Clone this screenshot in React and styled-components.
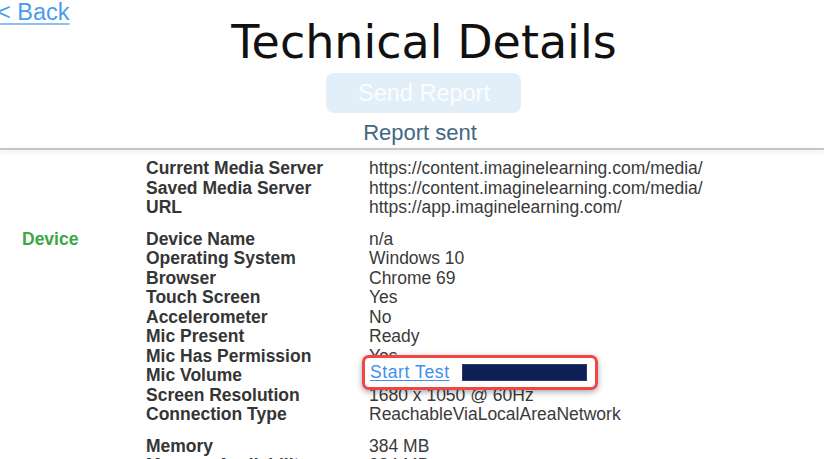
import React from "react";
import styled, { createGlobalStyle } from "styled-components";

const Global = createGlobalStyle`
  html, body { margin: 0; padding: 0; background: #ffffff; }
  body { width: 824px; height: 459px; overflow: hidden; font-family: "Liberation Sans", Arial, sans-serif; }
`;

const Page = styled.div`
  width: 824px;
  height: 459px;
  overflow: hidden;
  background: #fff;
`;

const Top = styled.header`
  display: grid;
  grid-template-columns: 1fr auto 1fr;
  padding-left: 24px;
`;

const BackLink = styled.a`
  grid-column: 1;
  grid-row: 1;
  justify-self: start;
  align-self: start;
  margin-left: -27px;
  margin-top: 1px;
  font-size: 23.5px;
  line-height: 23px;
  color: #4a9cea;
  text-decoration: underline;
  text-decoration-color: #8cc0f0;
  text-underline-offset: 3px;
  cursor: pointer;
`;

const Title = styled.h1`
  grid-column: 2;
  grid-row: 1;
  margin: 20px 0 0;
  font-family: "DejaVu Sans", sans-serif;
  font-weight: 400;
  font-size: 46px;
  line-height: 45px;
  color: #111;
  white-space: nowrap;
`;

const SendButton = styled.button`
  grid-column: 2;
  grid-row: 2;
  justify-self: center;
  margin-top: 8px;
  width: 195px;
  height: 40px;
  border: none;
  border-radius: 8px;
  background: #e2eff9;
  color: #fbfdff;
  font-family: "Liberation Sans", Arial, sans-serif;
  font-size: 23.5px;
  padding: 0;
`;

const Status = styled.div`
  grid-column: 2;
  grid-row: 3;
  justify-self: center;
  margin-top: 7px;
  margin-right: 8px;
  font-size: 22px;
  line-height: 25px;
  color: #3f6882;
`;

const Divider = styled.hr`
  margin: 3px 0 0;
  border: none;
  height: 2px;
  background: #c6c6c6;
  box-shadow: 0 2px 5px rgba(0, 0, 0, 0.12);
`;

const Table = styled.section`
  padding-top: 9px;
  display: flex;
  flex-direction: column;
  gap: 12px;
`;

const Group = styled.div`
  display: flex;
  flex-direction: column;
`;

const Row = styled.div`
  display: grid;
  grid-template-columns: 146px 223px 1fr;
  font-size: 17.5px;
  line-height: 19.5px;
  height: 19.5px;
`;

const Section = styled.div`
  padding-left: 22px;
  color: #3aa745;
  font-weight: 700;
`;

const Label = styled.div`
  color: #353535;
  font-weight: 700;
  white-space: nowrap;
`;

const Value = styled.div`
  position: relative;
  color: #3a3a3a;
  white-space: nowrap;
`;

const Callout = styled.div`
  position: absolute;
  left: -7px;
  top: -11px;
  width: 236px;
  height: 35px;
  box-sizing: border-box;
  border: 3px solid #f04545;
  border-radius: 7px;
  background: #fff;
  box-shadow: 0 2px 6px rgba(0, 0, 0, 0.35);
  z-index: 1;
  display: flex;
  align-items: center;
  gap: 12px;
  padding-left: 5px;
`;

const TestLink = styled.a`
  color: #3d8ff0;
  letter-spacing: 0.6px;
  text-decoration: underline;
  text-underline-offset: 2px;
  cursor: pointer;
`;

const VolumeBar = styled.div`
  width: 125px;
  height: 17px;
  background: #0e1e57;
  border: 1px solid #2a3a70;
  box-sizing: border-box;
`;

const groups = [
  {
    section: "",
    rows: [
      ["Current Media Server", "https://content.imaginelearning.com/media/"],
      ["Saved Media Server", "https://content.imaginelearning.com/media/"],
      ["URL", "https://app.imaginelearning.com/"],
    ],
  },
  {
    section: "Device",
    rows: [
      ["Device Name", "n/a"],
      ["Operating System", "Windows 10"],
      ["Browser", "Chrome 69"],
      ["Touch Screen", "Yes"],
      ["Accelerometer", "No"],
      ["Mic Present", "Ready"],
      ["Mic Has Permission", "Yes"],
      ["Mic Volume", "__mic__"],
      ["Screen Resolution", "1680 x 1050 @ 60Hz"],
      ["Connection Type", "ReachableViaLocalAreaNetwork"],
    ],
  },
  {
    section: "",
    rows: [
      ["Memory", "384 MB"],
      ["Memory Availability", "384 MB"],
    ],
  },
];

export default function App() {
  return (
    <Page>
      <Global />
      <Top>
        <BackLink>&lt; Back</BackLink>
        <Title>Technical Details</Title>
        <SendButton disabled>Send Report</SendButton>
        <Status>Report sent</Status>
      </Top>
      <Divider />
      <Table>
        {groups.map((g, gi) => (
          <Group key={gi}>
            {g.rows.map(([label, value], ri) => (
              <Row key={label}>
                <Section>{ri === 0 ? g.section : ""}</Section>
                <Label>{label}</Label>
                <Value>
                  {value === "__mic__" ? (
                    <Callout>
                      <TestLink>Start Test</TestLink>
                      <VolumeBar />
                    </Callout>
                  ) : (
                    value
                  )}
                </Value>
              </Row>
            ))}
          </Group>
        ))}
      </Table>
    </Page>
  );
}
